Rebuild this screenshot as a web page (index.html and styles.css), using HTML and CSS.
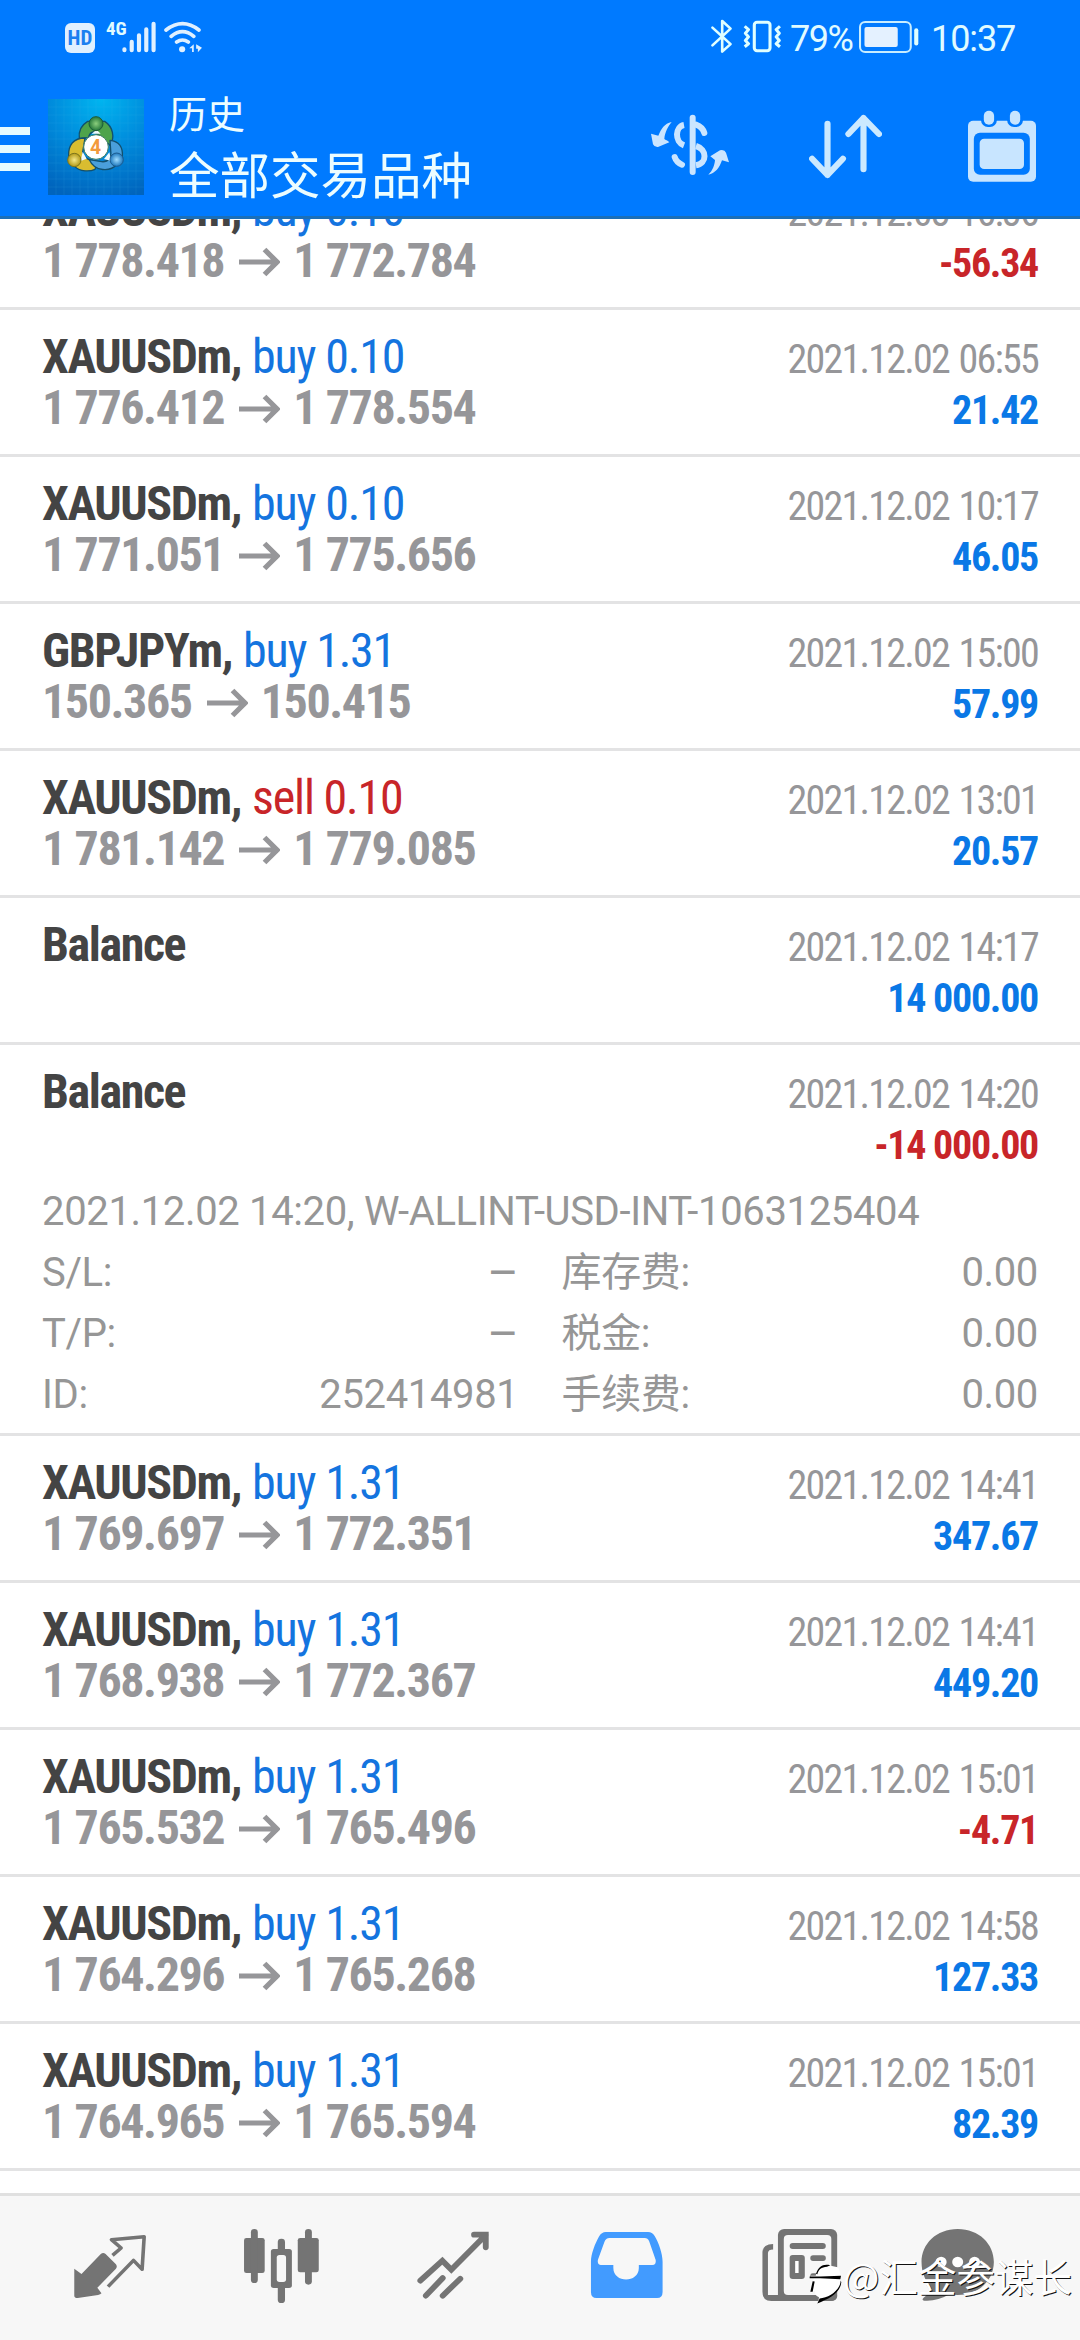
FILE: index.html
```html
<!DOCTYPE html>
<html lang="zh-CN">
<head>
<meta charset="utf-8">
<title>历史</title>
<link rel="stylesheet" href="styles.css">
</head>
<body>
<svg class="defs" width="0" height="0">
  <symbol id="arrow" viewBox="0 0 41 30"><path d="M0 15H37M25.500 2.500L38 15 25.500 27.500" fill="none" stroke="#969699" stroke-width="5.200"/></symbol>
</svg>
<div class="screen">
  <header class="header">
    <div class="status">
      <span class="hd">HD</span>
      <span class="net">4G</span>
      <svg class="signal" viewBox="355 60 98 102" preserveAspectRatio="none" stroke="#e0f0ff" stroke-width="12" stroke-linecap="round"><path d="M362 148V151M383 125V151M404 106V151M425 88V151M446 71V151"/></svg>
      <svg class="wifi" viewBox="478 60 114 102" preserveAspectRatio="none" fill="none" stroke="#e0f0ff" stroke-width="11" stroke-linecap="round"><path d="M484 90Q532 52 580 90M499 109Q532 81 565 109M515 126Q532 114 549 126"/><circle cx="531" cy="148" r="9" fill="#e0f0ff" stroke="none"/><path d="M552 145L565 133V156H560V145ZM572 133L589 143 577 157V146H572Z" fill="#e0f0ff" stroke="none"/></svg>
      <svg class="bt" viewBox="490 58 66 106" preserveAspectRatio="none" fill="none" stroke="#e0ffff" stroke-width="7.500" stroke-linejoin="round" stroke-linecap="round"><path d="M497 84L549 134 525 157V64L549 87 497 138"/></svg>
      <svg class="vib" viewBox="586 58 114 106" preserveAspectRatio="none" fill="none" stroke="#e0ffff" stroke-width="9" stroke-linejoin="round"><rect x="619" y="68" width="46" height="86" rx="8"/><path d="M591 80L602 90 593 101 602 112 593 123 602 133 591 142M694 80L683 90 692 101 683 112 692 123 683 133 694 142" stroke-width="9"/></svg>
      <span class="pct">79%</span>
      <svg class="battery" viewBox="925 58 175 106" preserveAspectRatio="none"><rect x="928" y="67" width="148" height="91" rx="15" fill="none" stroke="#c8edff" stroke-width="6"/><rect x="941" y="82" width="97" height="61" rx="6" fill="#e4f1ff"/><rect x="1086" y="86" width="12" height="52" rx="6" fill="#e0ffff"/></svg>
      <span class="time">10:37</span>
    </div>
    <div class="toolbar">
      <svg class="burger" viewBox="0 225 87 423" preserveAspectRatio="none" fill="#e6fbff"><path d="M0 381H87V405H0ZM0 435H87V459H0ZM0 489H87V513H0Z"/></svg>
      <svg class="logo" viewBox="24 26 288 288">
        <defs>
          <radialGradient id="sky" cx=".55" cy="0" r="1.050"><stop offset="0" stop-color="#00b5f0"/><stop offset=".5" stop-color="#008bdc"/><stop offset="1" stop-color="#0064bd"/></radialGradient>
          <radialGradient id="gr"><stop offset="0" stop-color="#8ccf7d"/><stop offset="1" stop-color="#25783a"/></radialGradient>
          <radialGradient id="ye"><stop offset="0" stop-color="#f5e88a"/><stop offset="1" stop-color="#b49a18"/></radialGradient>
          <radialGradient id="bl"><stop offset="0" stop-color="#9fdcff"/><stop offset="1" stop-color="#1e78bd"/></radialGradient>
        </defs>
        <rect x="24" y="26" width="288" height="288" fill="url(#sky)"/>
        <path d="M48 26V314M72 26V314M96 26V314M120 26V314M144 26V314M168 26V314M192 26V314M216 26V314M240 26V314M264 26V314M288 26V314M24 50H312M24 74H312M24 98H312M24 122H312M24 146H312M24 170H312M24 194H312M24 218H312M24 242H312M24 266H312M24 290H312" stroke="#4fc4f0" stroke-opacity=".18" stroke-width="2"/>
        <g stroke="#12506e" stroke-width="4" stroke-linejoin="round">
          <path d="M143 93C118 108 116 130 118 145L145 142C150 125 160 120 170 130L210 165C226 140 218 108 194 93Z" fill="#4ea34b"/>
          <path d="M135 143C100 143 84 165 86 198L104 228C120 245 150 244 165 237L172 215C150 210 130 205 128 185Z" fill="#d9bd30"/>
          <path d="M210 150C236 152 250 170 247 200L232 222C210 245 165 245 148 208L185 214C206 216 215 200 212 180Z" fill="#4a9fdb"/>
        </g>
        <path d="M128 184L140 205 122 212ZM208 186L214 212 192 206ZM155 130L170 118 182 130Z" fill="#eefaff"/>
        <circle cx="168" cy="100" r="21" fill="url(#gr)" stroke="#1c5b3a" stroke-width="3"/>
        <circle cx="103" cy="209" r="20" fill="url(#ye)" stroke="#7c741d" stroke-width="3"/>
        <circle cx="230" cy="208" r="20" fill="url(#bl)" stroke="#1c5b8f" stroke-width="3"/>
        <circle cx="168" cy="170" r="37" fill="#fff" stroke="#3b7c60" stroke-width="3"/>
        <text x="167" y="192" text-anchor="middle" class="four">4</text>
      </svg>
      <div class="titles"><div class="t1">历史</div><div class="t2">全部交易品种</div></div>
      <svg class="ic-cur" viewBox="30 -75 240 423" fill="none" stroke="#cbe5ff" stroke-width="18">
        <path d="M158 53V216" stroke-linecap="round"/><path d="M132 75C105 80 103 125 132 136M168 138C202 148 202 191 168 196"/><path d="M168 74C182 79 189 86 193 99M104 171C108 183 116 190 126 194" stroke-linecap="round"/>
        <g fill="#cbe5ff" stroke="none"><path d="M95 66C73 71 64 86 55 107L33 101 39 133Q43 142 54 141L88 127C82 121 77 120 73 117 75 95 84 80 95 66Z"/><path d="M205 224C218 212 224 195 225 180L211 169 240 151Q254 148 258 158L267 187 246 181C238 205 225 220 205 224Z"/></g>
      </svg>
      <svg class="ic-sort" viewBox="782 225 213 423" preserveAspectRatio="none" fill="none" stroke="#cbe9ff" stroke-width="18" stroke-linecap="round" stroke-linejoin="round"><path d="M836 371V525M791 476L836 525 881 476M941 508V354M897 402L941 354 986 402"/></svg>
      <svg class="ic-cal" viewBox="1243 225 198 423" preserveAspectRatio="none" fill="#c8e5ff"><rect x="1243" y="362" width="198" height="183" rx="15"/><rect x="1260" y="398" width="163" height="126" rx="18" fill="#007aff"/><rect x="1277" y="416" width="129" height="91" rx="13"/><rect x="1281" y="330" width="46" height="51" rx="20" fill="#007aff"/><rect x="1357" y="330" width="46" height="51" rx="20" fill="#007aff"/><rect x="1289" y="332" width="30" height="42" rx="15"/><rect x="1365" y="332" width="30" height="42" rx="15"/></svg>
    </div>
  </header>

  <main class="list">
    <section class="row first">
      <div class="line"><div><b>XAUUSDm,</b> <i class="buy">buy 0.10</i></div><span class="date">2021.12.03 16:36</span></div>
      <div class="line"><div class="price">1 778.418<svg><use href="#arrow"/></svg>1 772.784</div><span class="pl neg">-56.34</span></div>
    </section>
    <section class="row">
      <div class="line"><div><b>XAUUSDm,</b> <i class="buy">buy 0.10</i></div><span class="date">2021.12.02 06:55</span></div>
      <div class="line"><div class="price">1 776.412<svg><use href="#arrow"/></svg>1 778.554</div><span class="pl">21.42</span></div>
    </section>
    <section class="row">
      <div class="line"><div><b>XAUUSDm,</b> <i class="buy">buy 0.10</i></div><span class="date">2021.12.02 10:17</span></div>
      <div class="line"><div class="price">1 771.051<svg><use href="#arrow"/></svg>1 775.656</div><span class="pl">46.05</span></div>
    </section>
    <section class="row">
      <div class="line"><div><b>GBPJPYm,</b> <i class="buy">buy 1.31</i></div><span class="date">2021.12.02 15:00</span></div>
      <div class="line"><div class="price">150.365<svg><use href="#arrow"/></svg>150.415</div><span class="pl">57.99</span></div>
    </section>
    <section class="row">
      <div class="line"><div><b>XAUUSDm,</b> <i class="sell">sell 0.10</i></div><span class="date">2021.12.02 13:01</span></div>
      <div class="line"><div class="price">1 781.142<svg><use href="#arrow"/></svg>1 779.085</div><span class="pl">20.57</span></div>
    </section>
    <section class="row">
      <div class="line"><div><b>Balance</b></div><span class="date">2021.12.02 14:17</span></div>
      <div class="line end"><span class="pl">14 000.00</span></div>
    </section>
    <section class="row">
      <div class="line"><div><b>Balance</b></div><span class="date">2021.12.02 14:20</span></div>
      <div class="line end"><span class="pl neg">-14 000.00</span></div>
      <div class="details">
        <div class="note">2021.12.02 14:20, W-ALLINT-USD-INT-1063125404</div>
        <div class="pair"><span>S/L:</span><span class="dash">–</span></div><div class="pair"><span>库存费:</span><span>0.00</span></div>
        <div class="pair"><span>T/P:</span><span class="dash">–</span></div><div class="pair"><span>税金:</span><span>0.00</span></div>
        <div class="pair"><span>ID:</span><span>252414981</span></div><div class="pair"><span>手续费:</span><span>0.00</span></div>
      </div>
    </section>
    <section class="row">
      <div class="line"><div><b>XAUUSDm,</b> <i class="buy">buy 1.31</i></div><span class="date">2021.12.02 14:41</span></div>
      <div class="line"><div class="price">1 769.697<svg><use href="#arrow"/></svg>1 772.351</div><span class="pl">347.67</span></div>
    </section>
    <section class="row">
      <div class="line"><div><b>XAUUSDm,</b> <i class="buy">buy 1.31</i></div><span class="date">2021.12.02 14:41</span></div>
      <div class="line"><div class="price">1 768.938<svg><use href="#arrow"/></svg>1 772.367</div><span class="pl">449.20</span></div>
    </section>
    <section class="row">
      <div class="line"><div><b>XAUUSDm,</b> <i class="buy">buy 1.31</i></div><span class="date">2021.12.02 15:01</span></div>
      <div class="line"><div class="price">1 765.532<svg><use href="#arrow"/></svg>1 765.496</div><span class="pl neg">-4.71</span></div>
    </section>
    <section class="row">
      <div class="line"><div><b>XAUUSDm,</b> <i class="buy">buy 1.31</i></div><span class="date">2021.12.02 14:58</span></div>
      <div class="line"><div class="price">1 764.296<svg><use href="#arrow"/></svg>1 765.268</div><span class="pl">127.33</span></div>
    </section>
    <section class="row">
      <div class="line"><div><b>XAUUSDm,</b> <i class="buy">buy 1.31</i></div><span class="date">2021.12.02 15:01</span></div>
      <div class="line"><div class="price">1 764.965<svg><use href="#arrow"/></svg>1 765.594</div><span class="pl">82.39</span></div>
    </section>
  </main>

  <nav class="nav">
    <svg viewBox="70 48 499.500 432" preserveAspectRatio="none"><path d="M216 266L237 282 293 222Q300 216 307 222L337 253Q342 260 337 266L283 323 295 340Q292 344 285 345L226 354Q216 354 216 347Z"/><path d="M327 226L352 204 324 179 419 170 413 268 388 241 314 320" fill="none" stroke="#747474" stroke-width="10.500" stroke-linejoin="round"/></svg>
    <svg viewBox="569.500 48 499.500 432" preserveAspectRatio="none"><rect x="709" y="174" width="60" height="105" rx="7"/><rect x="729" y="147" width="20" height="162" rx="10"/><rect x="865" y="174" width="61" height="103" rx="7"/><rect x="886" y="147" width="20" height="167" rx="10"/><rect x="807" y="176" width="21" height="193" rx="10"/><rect x="787" y="207" width="61" height="117" rx="8"/><rect x="804" y="225" width="27" height="81" rx="8" fill="#f7f7f7"/></svg>
    <svg viewBox="1069 48 499.500 432" preserveAspectRatio="none"><path d="M1221 302L1285 242 1311 269 1411 165M1377 164H1411V202M1237 347L1286 294M1286 347L1337 296" fill="none" stroke="#747474" stroke-width="17" stroke-linecap="round"/></svg>
    <svg viewBox="0 48 499.500 432" preserveAspectRatio="none"><path d="M191 156H314Q326 156 333 168C345 188 356 222 356 245V336Q356 354 340 354H164Q148 354 148 336V245C148 222 160 190 171 170Q179 156 191 156Z" fill="#429bff"/><path d="M202 174H304Q313 174 317 184L336 240Q338 255 326 255H287V264C287 310 213 310 213 264V255H176Q166 253 168 240L187 186Q191 174 202 174Z" fill="#f7f7f7"/></svg>
    <svg viewBox="499.500 48 499.500 432" preserveAspectRatio="none"><rect x="691" y="147" width="172" height="216" rx="18"/><path d="M677 192V209Q662 208 662 220V345H863V350Q860 363 845 363H672Q646 363 646 335V215Q648 192 677 192Z"/><rect x="665" y="209" width="22" height="136" rx="6" fill="#f7f7f7"/><rect x="708" y="165" width="138" height="180" rx="12" fill="#f7f7f7"/><rect x="725" y="189" width="105" height="18" rx="9"/><rect x="785" y="226" width="45" height="17" rx="8"/><rect x="785" y="280" width="45" height="15" rx="7"/><rect x="725" y="225" width="44" height="72" rx="9"/><rect x="741" y="243" width="10" height="36" fill="#fff"/></svg>
    <svg viewBox="999 48 499.500 432" preserveAspectRatio="none"><path d="M1213 147C1275 147 1318 192 1318 246S1275 345 1213 345Q1199 345 1189 343C1166 357 1140 364 1116 362Q1107 361 1114 353C1130 340 1133 333 1134 323C1119 300 1108 278 1108 246C1108 192 1151 147 1213 147Z"/><circle cx="1165" cy="246" r="16" fill="#fff"/><circle cx="1213" cy="246" r="16" fill="#fff"/><circle cx="1262" cy="246" r="16" fill="#fff"/></svg>
  </nav>
  <div class="mark"><svg viewBox="176 155 102 128"><path d="M182 248Q183 225 190 205H180L182 196H196C203 173 218 162 238 165L262 170Q272 180 271 215C265 245 235 262 203 280L206 260Q192 256 194 240Z" fill="#fff"/><path d="M197 190C205 167 218 159 240 164L230 169C213 170 205 177 201 191ZM178 198H211L272 196 270 206 210 203H178ZM187 212L180 244H187L193 213ZM271 210C270 240 235 262 208 264L201 279C235 265 270 248 273 215Z" fill="#000"/></svg><span>@汇金参谋长</span></div>
</div>
</body>
</html>
```
FILE: styles.css
```css
* { box-sizing: border-box; }
body { margin: 0; background: #fff; }
svg { display: block; flex: none; }
.defs { position: absolute; }

.screen {
  position: relative;
  width: 1080px;
  height: 2340px;
  display: flex;
  flex-direction: column;
  overflow: hidden;
  font-family: "Roboto", "Noto Sans CJK SC", sans-serif;
}

/* header */
.header { height: 219px; flex: none; background: #007aff; border-bottom: 3px solid #1b6fb8; }
.status { height: 75px; display: flex; align-items: flex-start; padding: 19px 0 0 65px; color: #e0fbff; }
.hd { width: 30px; height: 30px; margin-top: 4px; border-radius: 6px; background: #e0f0ff; color: #1b7ff0; font: 700 21px/31px "Roboto Condensed", sans-serif; text-align: center; }
.net { width: 18px; margin-left: 11px; font: 700 19px/20px "Roboto Condensed", sans-serif; }
.signal { width: 34px; height: 34px; margin: 1px 0 0 -2px; }
.wifi { width: 39px; height: 34px; margin: 1px 0 0 8px; }
.bt { width: 23px; height: 35px; margin-left: auto; }
.vib { width: 39px; height: 35px; margin-left: 10px; }
.pct { width: 63px; margin: 0 6px 0 8px; font-size: 36px; line-height: 40px; letter-spacing: -1.5px; white-space: nowrap; }
.battery { width: 60px; height: 35px; }
.time { width: 82px; margin: 0 67px 0 12px; font-size: 36px; line-height: 40px; letter-spacing: -1.1px; white-space: nowrap; }

.toolbar { height: 141px; display: flex; align-items: flex-start; color: #ecfdff; }
.burger { width: 30px; height: 141px; }
.logo { width: 96px; height: 96px; margin: 24px 0 0 18px; }
.four { font: 700 58px "Roboto", sans-serif; fill: #f29a3c; }
.titles { margin-left: 25px; padding-top: 12px; white-space: nowrap; }
.t1 { font: 400 38px/50px "Noto Sans CJK SC", sans-serif; }
.t2 { font: 400 50.500px/70px "Noto Sans CJK SC", sans-serif; }
.ic-cur { width: 80px; height: 141px; margin-left: auto; }
.ic-sort { width: 73px; height: 141px; margin-left: 79px; }
.ic-cal { width: 68px; height: 141px; margin: 0 44px 0 86px; }

/* deals */
.list { flex: 1; overflow: hidden; background: #fff; }
.row { padding: 21px 42px; height: 147px; border-bottom: 3px solid #e3e3e4; }
.row:has(.details) { height: 391px; }
.first { margin-top: -56px; }
.line { height: 51px; display: flex; justify-content: space-between; align-items: baseline; font: 400 48px/51px "Roboto Condensed", sans-serif; white-space: nowrap; }
.end::before { content: "\200b"; }
.line b { color: #444; letter-spacing: -1.4px; }
.line i { font-style: normal; letter-spacing: -1.2px; }
.buy { color: #1474df; }
.sell { color: #c82529; }
.price { display: flex; align-items: baseline; font-weight: 700; color: #969699; letter-spacing: -1.4px; }
.price svg { width: 41px; height: 30px; margin: 0 13px 0 15px; }
.date { font-size: 40px; letter-spacing: -1.75px; word-spacing: 2px; color: #969699; }
.pl { font-size: 40px; font-weight: 700; letter-spacing: -1.3px; color: #0a78e6; }
.neg { color: #c82529; }
.details { margin-top: 13px; display: grid; grid-template-columns: 1fr 1fr; column-gap: 43px; grid-auto-rows: 61px; font-size: 40px; line-height: 61px; letter-spacing: -.35px; color: #969696; white-space: nowrap; }
.note { grid-column: 1 / 3; }
.pair { display: flex; justify-content: space-between; }
.dash { font-size: 48px; }

/* bottom tabs */
.nav { height: 147px; flex: none; display: flex; padding: 0 24px; background: #f7f7f7; border-top: 3px solid #e0e0e0; fill: #747474; }
.nav svg { width: 172px; height: 144px; }

/* watermark over the tabs */
.mark { position: absolute; left: 809px; top: 2249px; display: flex; align-items: flex-start; }
.mark svg { width: 34px; height: 43px; margin-top: 13px; }
.mark span { font: 400 38.500px/52px "Noto Sans CJK SC", sans-serif; color: #fff; text-shadow: 1px 1px 0 #111; white-space: nowrap; }
```
